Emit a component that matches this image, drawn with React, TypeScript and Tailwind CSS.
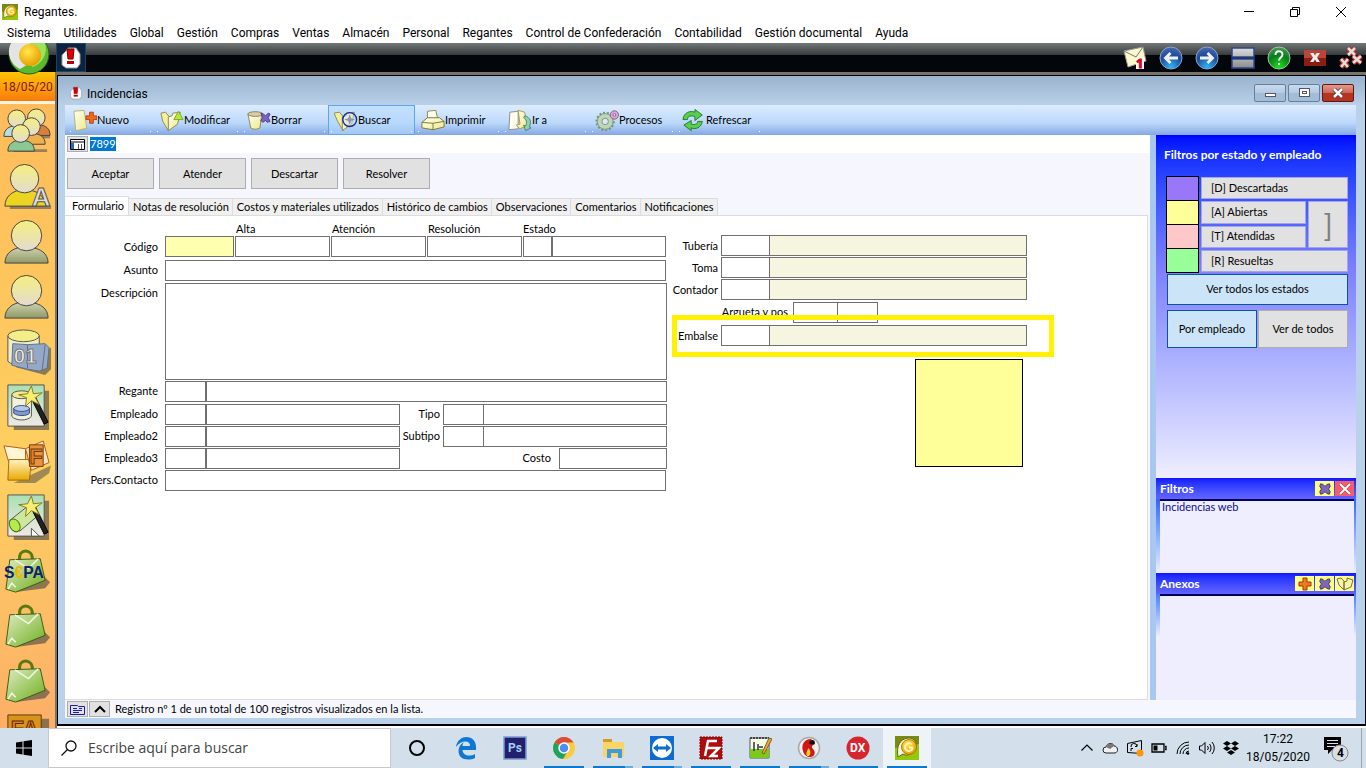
import React from 'react';

const uiFont = "font-[Roboto,'Open_Sans',sans-serif]";
const formFont = "font-[Lato,'Liberation_Sans',sans-serif]";
const iconFont = "font-['Liberation_Sans',Arial,sans-serif]";

const menus = [
    'Sistema', 'Utilidades', 'Global', 'Gestión', 'Compras', 'Ventas', 'Almacén', 'Personal',
    'Regantes', 'Control de Confederación', 'Contabilidad', 'Gestión documental', 'Ayuda',
];

const tabs = [
    'Formulario', 'Notas de resolución', 'Costos y materiales utilizados', 'Histórico de cambios',
    'Observaciones', 'Comentarios', 'Notificaciones',
];

/* Gradients shared by all the icons */
const Gradients: React.FC = () => (
    <svg className="absolute h-0 w-0" aria-hidden="true">
        <defs>
            <linearGradient id="paper" x1="0" y1="0" x2="1" y2="1">
                <stop offset="0" stopColor="#fffff0" />
                <stop offset="1" stopColor="#eee98a" />
            </linearGradient>
            <linearGradient id="head" x1="0" y1="0" x2="0" y2="1">
                <stop offset="0" stopColor="#f6ef7e" />
                <stop offset="1" stopColor="#e2dbd0" />
            </linearGradient>
            <linearGradient id="olive" x1="0" y1="0" x2="0" y2="1">
                <stop offset="0" stopColor="#cfd2ae" />
                <stop offset="1" stopColor="#8f9a68" />
            </linearGradient>
            <linearGradient id="sheet" x1="0" y1="0" x2="0" y2="1">
                <stop offset="0" stopColor="#a9e0b4" />
                <stop offset="1" stopColor="#efe9e4" />
            </linearGradient>
            <linearGradient id="bag" x1="0" y1="0" x2="1" y2="1">
                <stop offset="0" stopColor="#dcebc0" />
                <stop offset="1" stopColor="#6fae1e" />
            </linearGradient>
            <linearGradient id="box" x1="0" y1="0" x2="0" y2="1">
                <stop offset="0" stopColor="#fff3c4" />
                <stop offset="1" stopColor="#eaa800" />
            </linearGradient>
            <linearGradient id="silver" x1="0" y1="0" x2="0" y2="1">
                <stop offset="0" stopColor="#dcdcdc" />
                <stop offset="1" stopColor="#8c8c8c" />
            </linearGradient>
            <radialGradient id="ball" cx="0.4" cy="0.35" r="0.7">
                <stop offset="0" stopColor="#ffe94a" />
                <stop offset="1" stopColor="#e89a00" />
            </radialGradient>
            <radialGradient id="blueBall" cx="0.5" cy="0.9" r="0.9">
                <stop offset="0" stopColor="#2fb4f4" />
                <stop offset="0.6" stopColor="#1c4a9c" />
                <stop offset="1" stopColor="#4a6cb0" />
            </radialGradient>
            <radialGradient id="greenBall" cx="0.5" cy="0.9" r="0.9">
                <stop offset="0" stopColor="#1ee01e" />
                <stop offset="0.6" stopColor="#0b7a1c" />
                <stop offset="1" stopColor="#4a9a5a" />
            </radialGradient>
        </defs>
    </svg>
);

const AppLogo: React.FC<{ className: string }> = ({ className }) => (
    <svg className={className} viewBox="0 0 24 24">
        <path d="M0 0h24v24H0z" fill="#7b8a10" />
        <path d="M0 12L24 8V24H0z" fill="#96c80a" />
        <path d="M3 21C1 10 5 3 13 2s10 9 7 13-10 5-12 3z" fill="#f3f3e6" stroke="#5a6a10" />
        <circle cx="14" cy="11" r="7.5" fill="url(#ball)" stroke="#b07a00" />
        <path d="M17 8.5a4 4 0 1 0 .4 4.5V11.500H14" fill="none" stroke="#fff6c0" strokeWidth="1.800" />
    </svg>
);

const AlertIcon: React.FC<{ className: string }> = ({ className }) => (
    <svg className={className} viewBox="0 0 20 22">
        <path d="M5 4l2-3h8l2 3 2 3v10l-3 4H5l-4-3V8z" fill="#fff" stroke="#999" />
        <path d="M6 2h7l-1 10H7z" fill="#d00" stroke="#700" />
        <path d="M6 14h7v3H6z" fill="#b00" />
    </svg>
);

const Cross: React.FC<{ className: string; fill: string }> = ({ className, fill }) => (
    <svg className={className} viewBox="0 0 16 16">
        <path d="M3 2l3 1 2 2 2-2 3-1 1 3-2 3 2 3-1 3-3-1-2-2-2 2-3 1-1-3 2-3-2-3z" fill={fill} stroke="#3a2a6a" />
    </svg>
);

const toolIcons: Record<string, React.ReactNode> = {
    Nuevo: (
        <>
            <path d="M1 2l11-1 1 6 2 14-3 0-9 2z" fill="url(#paper)" stroke="#b5b070" />
            <path d="M18 3h4v4h4v4h-4v4h-4v-4h-4V7h4z" fill="#f06a1c" stroke="#b83c10" />
        </>
    ),
    Modificar: (
        <>
            <path d="M1 4l5-1 4 5-1 15-6-10z" fill="#f4f0a0" stroke="#8a8550" />
            <path d="M9 8l4-1 1-3 8-1-3 13-10 7z" fill="url(#paper)" stroke="#8a8550" />
            <path d="M20 2l5 9H15z" fill="#b4e83c" stroke="#7aa820" />
        </>
    ),
    Borrar: (
        <>
            <path d="M1 5l3 15c3 2 7 2 10 0l2-15z" fill="url(#paper)" stroke="#8a8550" />
            <ellipse cx="9" cy="5" rx="8" ry="2.500" fill="#d8cfa8" stroke="#8a7a50" />
            <path d="M15 4l3 1 2 2 3-3 2 1-2 4 2 4-3 1-2-2-3 2-2-2 2-3z" fill="#7a62c0" stroke="#4a3890" />
        </>
    ),
    Buscar: (
        <>
            <path d="M0 4l6-1 4 5 0 15-6-10z" fill="#f4f0a0" stroke="#8a8550" />
            <path d="M9 8l4-1 1-3 8-1-3 13-10 7z" fill="url(#paper)" stroke="#8a8550" />
            <circle cx="17" cy="11" r="7.500" fill="#cfe0f0" fillOpacity="0.5" stroke="#1c2c8c" strokeWidth="1.500" />
            <path d="M17 5l1.500 4.500L23 11l-4.500 1.500L17 17l-1.500-4.500L11 11l4.500-1.500z" fill="#8c98a8" />
        </>
    ),
    Imprimir: (
        <>
            <path d="M7 10V2l9-1 2 9z" fill="#ffffe8" stroke="#8a8550" />
            <path d="M1 14l6-5h13l5 4v6l-12 3-12-2z" fill="url(#paper)" stroke="#77733a" />
            <path d="M1 14l12 1 12-2M13 15v7" fill="none" stroke="#77733a" />
        </>
    ),
    'Ir a': (
        <>
            <path d="M2 3l9-1v19l-10 1z" fill="#fffff0" stroke="#8a8a80" />
            <path d="M11 1l7 2 3 14-8 4-4-4 4-1z" fill="url(#paper)" stroke="#a59a40" />
            <path d="M18 7c6 1 8 7 5 12l2 1-6 3-2-6 2 1c2-4 1-7-2-9z" fill="#8cd4a0" stroke="#4a7a8a" />
        </>
    ),
    Procesos: (
        <>
            <circle cx="11" cy="13" r="9" fill="#b8d4b4" stroke="#78907a" strokeWidth="3" strokeDasharray="2 2" />
            <circle cx="11" cy="13" r="8.500" fill="#bcd6b8" stroke="#80987e" />
            <circle cx="11" cy="13" r="3.500" fill="#dce8f8" stroke="#78907a" />
            <circle cx="21" cy="6" r="4.500" fill="#d8a8d4" stroke="#8a5a94" />
            <circle cx="21" cy="6" r="1.500" fill="#f0dcf4" stroke="#8a5a94" />
        </>
    ),
    Refrescar: (
        <>
            <path d="M1 11C2 3 9 1 14 3V0l8 6-8 6V8C10 6 6 7 6 11z" fill="#5ccc4c" stroke="#1c7a2c" />
            <path d="M22 13c-1 7-8 9-12 7v3l-8-6 8-5v4c4 1 7 0 7-3z" fill="#5ccc4c" stroke="#1c7a2c" />
        </>
    ),
};

const Person: React.FC<{ body: string }> = ({ body }) => (
    <>
        <path d="M3 46c0-10 8-15 16-16h10c10 1 18 6 18 16z" fill={body} stroke="#444" />
        <circle cx="25" cy="18" r="15.500" fill="url(#head)" stroke="#444" />
    </>
);

const MiniPerson: React.FC<{ x: number; y: number; body: string }> = ({ x, y, body }) => (
    <g transform={`translate(${x} ${y})`}>
        <path d="M-1 27c0-8 6-10 10-11h6c7 1 11 4 11 11z" fill={body} stroke="#444" />
        <circle cx="12" cy="9" r="9" fill="url(#head)" stroke="#444" />
    </g>
);

const Wand: React.FC = () => (
    <>
        <path d="M29 14l14 28 4-2-14-28z" fill="#222" stroke="#000" />
        <path d="M30 3l2 8 9-1-7 5 4 7-8-4-6 6 1-9-8-3 9-1z" fill="#f6ee70" stroke="#8a7a20" />
    </>
);

const Bag: React.FC = () => (
    <>
        <path d="M14 45l30-4 5-6-8-8z" fill="#444" opacity="0.6" />
        <path d="M18 12c-2-12 14-12 13 0" fill="none" stroke="#5a7a10" strokeWidth="3" />
        <path d="M8 12l31-1 5 22-30 12-10-3z" fill="url(#bag)" stroke="#3f5a14" />
        <path d="M13 12l14 9 10-10M6 42l4-6 4 4" fill="none" stroke="#f4f8e4" strokeWidth="1.500" />
    </>
);

const sideIcons: { name: string; art: React.ReactNode }[] = [
    {
        name: 'Grupos',
        art: (
            <>
                <path d="M12 42h34v3H12zM30 28h19v3H30z" fill="#555" opacity="0.6" />
                <MiniPerson x={23} y={1} body="#d8803c" />
                <MiniPerson x={3} y={2} body="#b4e0e4" />
                <MiniPerson x={18} y={10} body="#eeb04c" />
                <MiniPerson x={7} y={17} body="#8cc894" />
            </>
        ),
    },
    {
        name: 'Administradores',
        art: (
            <>
                <path d="M8 44h42v3H8z" fill="#555" opacity="0.6" />
                <path d="M3 44c0-10 8-15 14-16h12c8 1 14 6 16 16z" fill="#ecd422" stroke="#444" />
                <circle cx="23" cy="16" r="14.500" fill="url(#head)" stroke="#444" />
                <text x="30" y="44" fontSize="27" fontWeight="bold" fill="#e4dcdc" stroke="#555">A</text>
            </>
        ),
    },
    { name: 'Empleados', art: <Person body="url(#olive)" /> },
    { name: 'Clientes', art: <Person body="url(#olive)" /> },
    {
        name: 'Contadores',
        art: (
            <>
                <path d="M14 40l30 8 6-6V20z" fill="#444" opacity="0.6" />
                <path d="M6 8v26c6 6 26 6 32 0V8z" fill="#f2ecc4" stroke="#555" />
                <ellipse cx="22" cy="8" rx="16" ry="6" fill="#f4ee88" stroke="#555" />
                <path d="M11 16l15 1 18-1 4 4-2 21-8 3-12-2-16-4z" fill="#93a9c6" stroke="#60708c" />
                <path d="M26 17v24M44 17l-3 26" stroke="#60708c" />
                <text x="12" y="36" fontSize="21" fontWeight="bold" fill="#f4f0e8" stroke="#777">01</text>
            </>
        ),
    },
    {
        name: 'Asistente de depósitos',
        art: (
            <>
                <path d="M12 8h36v40H12z" fill="#444" opacity="0.6" />
                <path d="M6 2h37v42H6z" fill="url(#sheet)" stroke="#555" />
                <path d="M10 12v22c4 5 16 5 20 0V12z" fill="#f4f2dc" stroke="#555" />
                <ellipse cx="20" cy="12" rx="10" ry="4" fill="#f0ea90" stroke="#555" />
                <path d="M12 26v5c4 3 13 3 16 0v-5z" fill="#7c9cd0" stroke="#3c4c7c" />
                <ellipse cx="20" cy="26" rx="8" ry="3" fill="#b4c8ec" stroke="#3c4c7c" />
                <Wand />
            </>
        ),
    },
    {
        name: 'Facturas',
        art: (
            <>
                <path d="M12 46h22l14-10 2-8z" fill="#444" opacity="0.5" />
                <path d="M2 8l22 3v14H7z" fill="#fdf6d4" stroke="#b85c14" />
                <path d="M7 22h23l-2 21H6z" fill="url(#box)" stroke="#a06c10" />
                <path d="M24 11l18-8 6 22-18 8z" fill="#f8e4c4" stroke="#b85c14" />
                <path d="M28 7h14v22H28z" fill="#e8943c" stroke="#7a3c08" />
                <text x="28" y="27" fontSize="22" fontWeight="bold" fill="#d8842c" stroke="#7a3c08">F</text>
            </>
        ),
    },
    {
        name: 'Asistente de tuberías',
        art: (
            <>
                <path d="M12 8h36v40H12z" fill="#444" opacity="0.6" />
                <path d="M6 2h37v42H6z" fill="url(#sheet)" stroke="#555" />
                <path d="M8 28l20-16 10 10-20 17z" fill="#cde89c" stroke="#555" />
                <ellipse cx="13" cy="33" rx="5" ry="7" fill="#b4ec4c" stroke="#4a6a14" transform="rotate(-30 13 33)" />
                <path d="M30 36l8 8H30z" fill="#fff" stroke="#555" />
                <Wand />
            </>
        ),
    },
    {
        name: 'SEPA',
        art: (
            <>
                <Bag />
                <text x="2" y="31" fontSize="16" fontWeight="bold" fill="#10206c">
                    S<tspan fill="#f0b400">€</tspan>PA
                </text>
            </>
        ),
    },
    { name: 'Compras', art: <Bag /> },
    { name: 'Ventas', art: <Bag /> },
    {
        name: 'Facturación',
        art: (
            <>
                <path d="M12 6h36v40H12z" fill="#444" opacity="0.6" />
                <path d="M6 2h34v42H6z" fill="#d8941c" stroke="#5a3c08" />
                <text x="9" y="24" fontSize="22" fontWeight="bold" fill="#e87c1c" stroke="#5a2c08">FA</text>
            </>
        ),
    },
];

const TopBar: React.FC = () => (
    <header className={`bg-white text-black text-xs ${uiFont}`}>
        <div className="flex h-[23px] items-center pl-0.5 pr-0.5">
            <AppLogo className="size-4" />
            <span className="pl-1.5">Regantes.</span>
            <div className="ml-auto flex">
                <button aria-label="Minimizar" className="flex w-[46px] justify-center">
                    <svg className="size-3" viewBox="0 0 12 12"><path d="M1 5.500h10" stroke="#000" /></svg>
                </button>
                <button aria-label="Restaurar" className="flex w-[46px] justify-center">
                    <svg className="size-3" viewBox="0 0 12 12"><path d="M1.500 3.500h7v7h-7zM3.500 3.500v-2h7v7h-2" fill="none" stroke="#000" /></svg>
                </button>
                <button aria-label="Cerrar" className="flex w-[46px] justify-center">
                    <svg className="size-3" viewBox="0 0 12 12"><path d="M1 1l10 10M11 1L1 11" stroke="#000" /></svg>
                </button>
            </div>
        </div>
        <nav className="flex h-5 items-center gap-[13px] pl-[7px]">
            {menus.map((m) => (
                <button key={m} className="whitespace-nowrap">{m}</button>
            ))}
        </nav>
    </header>
);

const BlackBar: React.FC = () => (
    <div className="relative flex h-[29px] items-center bg-linear-to-b from-[#727877] from-0% via-[#3a3d3f] via-40% to-[#03060b] to-41%">
        <div className="w-14" />
        <svg className="absolute left-2 top-0 z-10 h-8 w-11" viewBox="0 0 44 32">
            <circle cx="21" cy="11" r="20" fill="#5cb82c" stroke="#2c5c14" />
            <path d="M3 0a19 19 0 0 0 9 26l10-6V0z" fill="#e4e4e4" />
            <path d="M22 0h15c3 10-2 20-12 24l-5-4z" fill="#9ce45c" />
            <circle cx="22" cy="12" r="11" fill="url(#ball)" />
        </svg>
        <button aria-label="Incidencias" className="flex h-full w-[30px] items-center justify-center border border-[#1c4468] bg-[#0c2440]">
            <AlertIcon className="h-[22px] w-5" />
        </button>
        <div className="ml-auto flex gap-3 pr-[3px]">
            <button aria-label="Mensajes">
                <svg className="size-6 overflow-visible" viewBox="0 0 24 24">
                    <path d="M1 5l19-4 3 14-18 6z" fill="#fbf8cc" stroke="#999" />
                    <path d="M1 5l12 6 7-10" fill="none" stroke="#777" />
                    <path d="M13 12h8v11h-8z" fill="#fff" />
                    <text x="13" y="22" fontSize="13" fontWeight="bold" fill="#e00020" stroke="#e00020">1</text>
                </svg>
            </button>
            <button aria-label="Anterior">
                <svg className="size-6" viewBox="0 0 24 24">
                    <circle cx="12" cy="12" r="11" fill="url(#blueBall)" stroke="#8aa4c8" />
                    <path d="M4.500 12l6-6 2 2-2.500 2.500h9v3h-9l2.500 2.500-2 2z" fill="#f0f0f0" />
                </svg>
            </button>
            <button aria-label="Siguiente">
                <svg className="size-6" viewBox="0 0 24 24">
                    <circle cx="12" cy="12" r="11" fill="url(#blueBall)" stroke="#8aa4c8" />
                    <path d="M19.500 12l-6-6-2 2 2.500 2.500H5v3h9l-2.500 2.500 2 2z" fill="#f0f0f0" />
                </svg>
            </button>
            <button aria-label="Mosaico">
                <svg className="size-6" viewBox="0 0 24 24">
                    <path d="M1 2h22v9H1zM1 13h22v9H1z" fill="url(#silver)" stroke="#2c4890" strokeWidth="1.500" />
                </svg>
            </button>
            <button aria-label="Ayuda">
                <svg className="size-6" viewBox="0 0 24 24">
                    <circle cx="12" cy="12" r="11" fill="url(#greenBall)" stroke="#9cc89c" />
                    <path d="M8.500 9c0-5 7-5 7-.500 0 3-3.500 3-3.500 6M12 17v2" fill="none" stroke="#f0fff0" strokeWidth="2" />
                </svg>
            </button>
            <button aria-label="Cerrar ventana">
                <svg className="size-6" viewBox="0 0 24 24">
                    <path d="M1 4h22v16H1z" fill="#b8443a" />
                    <path d="M1 12h22v8H1z" fill="#8a1c14" />
                    <path d="M7 7h3.500l1.500 2.500L13.500 7H17l-3 4.500 3 4.500h-3.500L12 13.500 10.500 16H7l3-4.500z" fill="#eee" />
                </svg>
            </button>
            <button aria-label="Cerrar todas">
                <svg className="size-6" viewBox="0 0 24 24">
                    <path d="M9 2l7 7M16 2L9 9M2 13l7 8M9 13l-7 8M14 10l8 7M22 10l-8 7" stroke="#a8382c" strokeWidth="5" />
                    <path d="M9 2l7 7M16 2L9 9M2 13l7 8M9 13l-7 8M14 10l8 7M22 10l-8 7" stroke="#e8dcdc" strokeWidth="2.500" />
                </svg>
            </button>
        </div>
    </div>
);

const SideBar: React.FC = () => (
    <aside className="flex w-[55px] shrink-0 flex-col overflow-hidden bg-linear-175 from-[#ffb95a] via-[#fdd060] via-60% to-[#fcae68] [contain:size]">
        <div className={`flex h-[29px] shrink-0 items-center justify-center bg-linear-to-b from-[#ffc400] to-[#f97a0c] text-xs text-[#7a1c08] ${uiFont}`}>
            18/05/20
        </div>
        <div className="h-[3px] shrink-0 bg-[#fff4dc]" />
        {sideIcons.map((icon) => (
            <button key={icon.name} aria-label={icon.name} className="h-[55px] shrink-0 pl-0.5">
                <svg className={`size-[50px] ${iconFont}`} viewBox="0 0 51 49">{icon.art}</svg>
            </button>
        ))}
    </aside>
);

const WindowTitle: React.FC = () => (
    <div className={`flex h-[29px] items-center gap-[5px] bg-linear-to-b from-[#9ab3ce] to-[#b9d0e8] pl-3 pr-[11px] text-xs text-black ${uiFont}`}>
        <AlertIcon className="mt-1 h-4 w-3" />
        <h1 className="pt-1.5">Incidencias</h1>
        <div className="ml-auto flex gap-0.5 pt-1">
            <button aria-label="Minimizar incidencias" className="flex h-[18px] w-8 items-center justify-center rounded-xs border border-[#64809c] bg-linear-to-b from-[#c8daee] via-[#b4cae2] via-50% to-[#a4bcd6] to-51%">
                <span className="mt-1 h-1 w-[11px] border border-[#556] bg-white" />
            </button>
            <button aria-label="Maximizar incidencias" className="flex h-[18px] w-8 items-center justify-center rounded-xs border border-[#64809c] bg-linear-to-b from-[#c8daee] via-[#b4cae2] via-50% to-[#a4bcd6] to-51%">
                <span className="flex h-[9px] w-[11px] items-center justify-center border border-[#556] bg-white">
                    <span className="h-[3px] w-[5px] border border-[#556]" />
                </span>
            </button>
            <button aria-label="Cerrar incidencias" className="flex h-[18px] w-8 items-center justify-center rounded-xs border border-[#6a1410] bg-linear-to-b from-[#e09a90] via-[#cc6454] via-50% to-[#b43424] to-51%">
                <svg className="h-2.5 w-3" viewBox="0 0 12 10">
                    <path d="M2 1l8 8M10 1L2 9" stroke="#533" strokeWidth="4" />
                    <path d="M2 1l8 8M10 1L2 9" stroke="#fff" strokeWidth="2.500" />
                </svg>
            </button>
        </div>
    </div>
);

const ToolBar: React.FC = () => (
    <div className={`flex h-[30px] bg-linear-to-b from-[#dcecff] via-[#bcd8fa] via-60% to-[#84a8e4] pl-0.5 ${formFont}`}>
        {Object.keys(toolIcons).map((name) => (
            <button
                key={name}
                className={`relative flex w-[87px] items-center border pl-[5px] text-[11px] text-black ${name === 'Buscar' ? 'border-[#5fa4ec] bg-[#b4d8fc]/60' : 'border-transparent'}`}
            >
                <svg className="h-[23px] w-6 shrink-0" viewBox="0 0 26 24">{toolIcons[name]}</svg>
                <span>{name}</span>
                <span className="absolute bottom-0.5 left-0.5 size-px bg-white" />
                <span className="absolute bottom-0.5 right-0.5 size-px bg-white" />
            </button>
        ))}
    </div>
);

const field = 'block h-[21px] border border-[#707070] px-1 outline-none';

const Row: React.FC<{ label: string; id: string; className?: string; children: React.ReactNode }> = ({ label, id, className = '', children }) => (
    <div className={`flex ${className}`}>
        <label htmlFor={id} className="w-[100px] pr-[7px] pt-[3px] text-right">{label}</label>
        {children}
    </div>
);

const EmployeeRow: React.FC<{ label: string; id: string; className: string; children: React.ReactNode }> = ({ label, id, className, children }) => (
    <Row label={label} id={id} className={className}>
        <input id={id} className={`${field} w-[41px]`} />
        <input aria-label={`Nombre ${label}`} className={`${field} w-[194px]`} />
        {children}
    </Row>
);

const dates = [
    { label: 'Alta', id: 'alta' },
    { label: 'Atención', id: 'atencion' },
    { label: 'Resolución', id: 'resolucion' },
];

const MainForm: React.FC = () => (
    <form className="w-[602px] shrink-0">
        <div className="flex">
            <label htmlFor="codigo" className="w-[100px] pr-[7px] pt-6 text-right">Código</label>
            <input id="codigo" className={`${field} mr-px mt-5 w-[69px] bg-[#ffffb0]`} />
            {dates.map((d) => (
                <div key={d.id} className="mr-px">
                    <label htmlFor={d.id} className="flex h-5 items-end pl-px">{d.label}</label>
                    <input id={d.id} className={`${field} w-[95px]`} />
                </div>
            ))}
            <div>
                <label htmlFor="estado" className="flex h-5 items-end">Estado</label>
                <div className="flex">
                    <input id="estado" className={`${field} w-[29px]`} />
                    <input aria-label="Nombre del estado" className={`${field} w-[114px]`} />
                </div>
            </div>
        </div>
        <Row label="Asunto" id="asunto" className="mt-[3px]">
            <input id="asunto" className={`${field} w-[501px]`} />
        </Row>
        <Row label="Descripción" id="descripcion" className="mt-0.5">
            <textarea id="descripcion" className="block h-[97px] w-[502px] resize-none border border-[#707070] outline-none" />
        </Row>
        <Row label="Regante" id="regante" className="mt-px">
            <input id="regante" className={`${field} w-[41px]`} />
            <input aria-label="Nombre del regante" className={`${field} w-[461px]`} />
        </Row>
        <EmployeeRow label="Empleado" id="empleado" className="mt-0.5">
            <label htmlFor="tipo" className="w-[43px] pr-[3px] pt-[3px] text-right">Tipo</label>
            <input id="tipo" className={`${field} w-10 border-r-0`} />
            <input aria-label="Nombre del tipo" className={`${field} w-[184px]`} />
        </EmployeeRow>
        <EmployeeRow label="Empleado2" id="empleado2" className="mt-px">
            <label htmlFor="subtipo" className="w-[43px] pr-[3px] pt-[3px] text-right">Subtipo</label>
            <input id="subtipo" className={`${field} w-10 border-r-0`} />
            <input aria-label="Nombre del subtipo" className={`${field} w-[184px]`} />
        </EmployeeRow>
        <EmployeeRow label="Empleado3" id="empleado3" className="mt-px">
            <label htmlFor="costo" className="w-[159px] pr-2 pt-[3px] text-right">Costo</label>
            <input id="costo" className={`${field} w-[108px]`} />
        </EmployeeRow>
        <Row label="Pers.Contacto" id="contacto" className="mt-px">
            <input id="contacto" className={`${field} w-[501px]`} />
        </Row>
    </form>
);

const AssetRow: React.FC<{ label: string; id: string }> = ({ label, id }) => (
    <div className="flex">
        <label htmlFor={id} className="w-[54px] pr-[3px] pt-1 text-right">{label}</label>
        <input id={id} className={`${field} w-12 border-r-0`} />
        <input aria-label={`Nombre ${label}`} className={`${field} w-[258px] bg-[#f5f5e0]`} />
    </div>
);

const AssetForm: React.FC = () => (
    <form className="flex w-[360px] shrink-0 flex-col pt-[19px]">
        <div className="flex flex-col gap-px">
            <AssetRow label="Tubería" id="tuberia" />
            <AssetRow label="Toma" id="toma" />
            <AssetRow label="Contador" id="contador" />
        </div>
        <div className="mt-0.5 flex">
            <label htmlFor="argueta" className="w-[126px] pr-[5px] pt-[3px] text-right">Argueta y pos</label>
            <input id="argueta" className={`${field} w-11 border-r-0`} />
            <input aria-label="Posición" className={`${field} w-[41px]`} />
        </div>
        <div className="relative mt-0.5">
            <AssetRow label="Embalse" id="embalse" />
            <div className="pointer-events-none absolute -bottom-[11px] -right-[27px] -top-2.5 left-[5px] border-5 border-[#fff200]" />
        </div>
        <div className="mr-1 mt-[13px] size-[108px] self-end border border-black bg-[#ffff99]" />
    </form>
);

const stateButton = 'border border-[#a4a4e8] bg-[#e1e1e1] pl-[9px] text-left';

const StatePanel: React.FC = () => (
    <aside className={`flex w-[206px] shrink-0 flex-col border-l-6 border-[#a8c8f0] bg-[#efeeff] text-[11px] ${formFont}`}>
        <section className="flex h-[343px] flex-col bg-linear-to-b from-[#0000ff] via-[#8080ff] via-40% to-[#efeeff] px-2">
            <h2 className="pb-[13px] pt-3 font-bold leading-4 text-white text-xs">Filtros por estado y empleado</h2>
            <div className="ml-0.5 flex gap-0.5">
                <div className="w-[33px] border border-b-0 border-black *:h-6 *:border-b *:border-black">
                    <div className="bg-[#9878f8]" />
                    <div className="bg-[#ffff99]" />
                    <div className="bg-[#ffc8c8]" />
                    <div className="bg-[#98ff98]" />
                </div>
                <div className="grid grow grid-cols-[1fr_40px] grid-rows-4 gap-x-0.5 gap-y-0.5 pb-px pt-px">
                    <button className={`${stateButton} col-span-2`}>[D] Descartadas</button>
                    <button className={stateButton}>[A] Abiertas</button>
                    <button aria-label="Abiertas y atendidas" className="row-span-2 border border-[#a4a4e8] bg-[#e1e1e1] text-3xl text-[#808080]">]</button>
                    <button className={stateButton}>[T] Atendidas</button>
                    <button className={`${stateButton} col-span-2`}>[R] Resueltas</button>
                </div>
            </div>
            <button className="ml-[3px] mt-px h-[31px] border border-[#0c5499] bg-[#cce4f7]">Ver todos los estados</button>
            <div className="ml-[3px] mt-[5px] grid h-[38px] grid-cols-2 gap-px">
                <button className="border border-[#0c5499] bg-[#cce4f7]">Por empleado</button>
                <button className="border border-[#adadad] bg-[#e1e1e1]">Ver de todos</button>
            </div>
        </section>
        <section className="flex h-[95px] flex-col bg-linear-to-b from-[#1010ff] to-[#efeeff]">
            <div className="flex h-[21px] items-center gap-px bg-linear-to-b from-[#1414ff] to-[#6464ff] pl-1 pr-0.5">
                <h2 className="mr-auto text-xs font-bold text-white">Filtros</h2>
                <button aria-label="Quitar filtro" className="flex h-[15px] w-[19px] items-center justify-center bg-[#ffff88]">
                    <Cross className="size-3.5" fill="#8068b8" />
                </button>
                <button aria-label="Cerrar filtros" className="flex h-[15px] w-[19px] items-center justify-center bg-[#f85c6c]">
                    <svg className="size-3" viewBox="0 0 12 12">
                        <path d="M1 1l10 10M11 1L1 11" stroke="#844" strokeWidth="3" />
                        <path d="M1 1l10 10M11 1L1 11" stroke="#fff" strokeWidth="2" />
                    </svg>
                </button>
            </div>
            <div className="ml-1 mr-0.5 grow border-t-2 border-[#000060] bg-[#efeeff] pl-0.5 leading-3">
                <a href="#incidencias-web" className="text-[#0c0c8c]">Incidencias web</a>
            </div>
        </section>
        <section className="flex grow flex-col bg-linear-to-b from-[#1010ff] from-0% to-[#efeeff] to-50%">
            <div className="flex h-[21px] items-center gap-px bg-linear-to-b from-[#1414ff] to-[#6464ff] pl-1 pr-0.5">
                <h2 className="mr-auto text-xs font-bold text-white">Anexos</h2>
                <button aria-label="Añadir anexo" className="flex h-[15px] w-[19px] items-center justify-center bg-[#ffff88]">
                    <svg className="size-3.5" viewBox="0 0 14 14"><path d="M5 1h4v4h4v4H9v4H5V9H1V5h4z" fill="#f07820" stroke="#983c08" /></svg>
                </button>
                <button aria-label="Quitar anexo" className="flex h-[15px] w-[19px] items-center justify-center bg-[#ffff88]">
                    <Cross className="size-3.5" fill="#8068b8" />
                </button>
                <button aria-label="Abrir anexo" className="flex h-[15px] w-[19px] items-center justify-center bg-[#ffff88]">
                    <svg className="h-[15px] w-[18px]" viewBox="0 0 18 15"><path d="M1 3l4-1 3 3 0 9-5-5zM8 6l3-1 0-3 6 2-2 7-7 3z" fill="#f8f4b0" stroke="#77733a" /></svg>
                </button>
            </div>
            <div className="ml-1 mr-0.5 grow border-t-2 border-[#000060] bg-[#efeeff]" />
        </section>
    </aside>
);

const IncidentWindow: React.FC = () => (
    <main className="flex min-w-0 grow flex-col border border-b-2 border-black bg-[#b9d1ea]">
        <WindowTitle />
        <div className="mb-1.5 ml-[7px] mr-[9px] flex grow flex-col bg-[#f6f7fe]">
            <ToolBar />
            <div className="flex grow">
                <div className={`flex min-w-0 grow flex-col text-[11px] leading-[14px] text-black ${formFont}`}>
                    <div className="flex h-[18px] items-center bg-white pl-0.5">
                        <button aria-label="Ver tabla" className="flex h-4 w-[21px] items-center justify-center border border-[#adadad] bg-[#e1e1e1]">
                            <svg className="h-[11px] w-[15px]" viewBox="0 0 15 11">
                                <path d="M.500 .500h14v10H.500z" fill="#fff" stroke="#000" />
                                <path d="M1 3h13" stroke="#000" />
                                <path d="M1 4h3v6H1z" fill="#1c6cd0" />
                                <path d="M8.500 5v5M11.500 5v5" stroke="#555" />
                            </svg>
                        </button>
                        <span className="ml-0.5 bg-[#0078d7] text-[11px] leading-[14px] text-white">7899</span>
                    </div>
                    <div className="flex gap-[5px] pb-[7px] pl-0.5 pt-[5px] *:h-[31px] *:w-[87px] *:border *:border-[#adadad] *:bg-[#e1e1e1]">
                        <button>Aceptar</button>
                        <button>Atender</button>
                        <button>Descartar</button>
                        <button>Resolver</button>
                    </div>
                    <div role="tablist" className="flex h-[19px] items-end">
                        {tabs.map((t, i) => (
                            <button
                                key={t}
                                role="tab"
                                aria-selected={i === 0}
                                className={`whitespace-nowrap border-r border-t border-[#dcdcdc] ${i === 0 ? 'h-[19px] bg-white pl-[7px] pr-1' : 'h-[17px] bg-[#f0f0f0] pl-1 pr-[3px]'}`}
                            >
                                {t}
                            </button>
                        ))}
                    </div>
                    <div role="tabpanel" className="mr-0.5 flex grow border-b border-r border-t border-[#dcdcdc] bg-white">
                        <MainForm />
                        <AssetForm />
                    </div>
                </div>
                <StatePanel />
            </div>
            <div className={`flex h-[18px] items-center gap-px pl-0.5 text-[11px] text-black ${formFont}`}>
                <button aria-label="Ver ficha" className="flex h-4 w-[21px] items-center justify-center border border-[#adadad] bg-[#e1e1e1]">
                    <svg className="h-[11px] w-[15px]" viewBox="0 0 15 11">
                        <path d="M.500 1.500h7l1 1h6v8H.500zM3 4.500h4M3 6.500h9M3 8.500h6M9 4.500h3" fill="none" stroke="#1c1c9c" />
                    </svg>
                </button>
                <button aria-label="Desplegar" className="flex h-4 w-[21px] items-center justify-center border border-[#adadad] bg-[#e1e1e1]">
                    <svg className="h-2 w-3" viewBox="0 0 12 8"><path d="M1 7l5-5 5 5" fill="none" stroke="#000" strokeWidth="2" /></svg>
                </button>
                <span className="pl-1">Registro nº 1 de un total de 100 registros visualizados en la lista.</span>
            </div>
        </div>
    </main>
);

const apps: { name: string; state: string; art: React.ReactNode }[] = [
    { name: 'Cortana', state: '', art: <circle cx="12" cy="12" r="7" fill="none" stroke="#000" strokeWidth="2" /> },
    {
        name: 'Edge',
        state: '',
        art: <path d="M2 11C3 4 8 1 12.500 1 18 1 22 5 22 11v3H8.500c.500 4 3 5.500 6.500 5.500 2.500 0 4.500-.500 6-1.500v4c-2 1-4.500 1.500-7 1.500C8 23.500 4.500 20 4.500 15c0-4 2-7 5.500-9-1 1.500-1.500 2.500-1.500 4H16c0-3-1.500-4.500-4.500-4.500C7.500 5.500 4.500 7.500 2 11z" fill="#0c78d4" />,
    },
    {
        name: 'Photoshop',
        state: '',
        art: (
            <>
                <path d="M1 1h22v22H1z" fill="#22206c" stroke="#7c9cd0" strokeWidth="1.500" />
                <text x="5" y="16" fontSize="12" fontWeight="bold" fill="#a4ccf8">Ps</text>
            </>
        ),
    },
    {
        name: 'Chrome',
        state: 'on',
        art: (
            <>
                <circle cx="12" cy="12" r="11" fill="#f8cc3c" />
                <path d="M12 12L2.500 6.500A11 11 0 0 1 21.500 6.500H12z" fill="#dc4a3c" />
                <path d="M12 12L2.500 6.500A11 11 0 0 0 11 23l5-8.500z" fill="#1ca45c" />
                <circle cx="12" cy="12" r="5" fill="#4c8cf4" stroke="#fff" strokeWidth="1.500" />
            </>
        ),
    },
    {
        name: 'Explorador de archivos',
        state: 'multi',
        art: (
            <>
                <path d="M2 3h9v4H2z" fill="#d89c1c" />
                <path d="M2 6h21v15H2z" fill="#fcd466" />
                <path d="M6 13h15v9h-4v-5h-7v5H6z" fill="#3c9cdc" />
            </>
        ),
    },
    {
        name: 'TeamViewer',
        state: 'multi',
        art: (
            <>
                <path d="M0 0h24v24H0z" fill="#0c6cd0" />
                <circle cx="12" cy="12" r="10" fill="#fff" />
                <path d="M3 12l5-4v2.500h8V8l5 4-5 4v-2.500H8V16z" fill="#0c6cd0" />
            </>
        ),
    },
    {
        name: 'FileZilla',
        state: 'on',
        art: (
            <>
                <path d="M1 1h22v22H1z" fill="#b00c0c" stroke="#800" strokeDasharray="2 1" />
                <path d="M6 20L9 5h9M8 12h6M12 12h8l-8 8h7" fill="none" stroke="#fff" strokeWidth="2.500" />
            </>
        ),
    },
    {
        name: 'Notepad++',
        state: 'on',
        art: (
            <>
                <path d="M2 2h19v20H2z" fill="#f4fce8" stroke="#555" />
                <path d="M2 13h19v9H2z" fill="#7cc81c" />
                <path d="M2 2h19" stroke="#444" strokeWidth="2" strokeDasharray="2 1" />
                <path d="M6 6v9M10 8v6M11 11h4" stroke="#333" strokeWidth="1.500" />
                <path d="M14 17L21 2l3 1-8 15z" fill="#e8a83c" stroke="#8a5a1c" />
            </>
        ),
    },
    {
        name: 'Firebird',
        state: 'multi',
        art: (
            <>
                <circle cx="12" cy="12" r="10.500" fill="#f0f0f0" stroke="#aaa" strokeWidth="1.500" />
                <path d="M14 3c-7 0-10 6-8 12 1 4 4 6 7 6 5 0 6-5 3-8-2-2-1-4 2-5z" fill="#d01818" />
                <path d="M12 7c1-4 6-4 6 0-1 2-4 2-6 0z" fill="#111" />
                <path d="M10 20c-2-4 1-5 1-8 3 2 3 6 1 8z" fill="#fcd41c" />
            </>
        ),
    },
    {
        name: 'DX',
        state: 'on',
        art: (
            <>
                <circle cx="12" cy="12" r="11.500" fill="#d8242c" />
                <text x="4" y="16" fontSize="12" fontWeight="bold" fill="#fff">DX</text>
            </>
        ),
    },
];

const TaskBar: React.FC = () => (
    <footer className={`flex h-10 shrink-0 bg-[#d3e0eb] text-black ${uiFont}`}>
        <button aria-label="Inicio" className="flex w-12 items-center justify-center">
            <svg className="size-4" viewBox="0 0 16 16">
                <path d="M0 2.500l6.500-1v6H0zM7.500 1.300L16 0v7.500H7.500zM0 8.500h6.500v6L0 13.500zM7.500 8.500H16V16l-8.500-1.300z" />
            </svg>
        </button>
        <label className="flex w-[343px] items-center gap-[11px] border border-[#c8c8c8] bg-white pl-3">
            <svg className="size-4 shrink-0" viewBox="0 0 16 16">
                <circle cx="10" cy="6" r="5" fill="none" stroke="#111" strokeWidth="1.300" />
                <path d="M6.500 9.500L0.500 15.500" stroke="#111" strokeWidth="1.300" />
            </svg>
            <input aria-label="Buscar en Windows" placeholder="Escribe aquí para buscar" className="min-w-0 grow text-sm outline-none placeholder:text-[#444] font-['Open_Sans','Noto_Sans',sans-serif]" />
        </label>
        <div className="ml-0.5 flex gap-px">
            {apps.map((app) => (
                <button key={app.name} aria-label={app.name} className="flex w-12 flex-col items-center">
                    <svg className="mt-2 size-6" viewBox="0 0 24 24">{app.art}</svg>
                    {app.state !== '' && (
                        <span className="mt-auto flex h-0.5 w-10 bg-[#0c78d0]">
                            {app.state === 'multi' && <span className="ml-auto w-2 bg-[#6cacdc]" />}
                        </span>
                    )}
                </button>
            ))}
            <button aria-label="Regantes" className="flex w-12 flex-col items-center bg-[#eef3f7]">
                <AppLogo className="mt-2 size-6" />
                <span className="mt-auto h-0.5 w-10 bg-[#0c78d0]" />
            </button>
        </div>
        <div className="ml-auto flex items-center *:flex *:w-6 *:justify-center">
            <button aria-label="Iconos ocultos">
                <svg className="size-3.5" viewBox="0 0 14 14"><path d="M1.500 9.500L7 4l5.500 5.500" fill="none" stroke="#000" strokeWidth="1.200" /></svg>
            </button>
            <button aria-label="OneDrive">
                <svg className="h-3.5 w-[18px]" viewBox="0 0 18 14"><path d="M4 12a3 3 0 0 1 0-6c1-4 7-5 8-1 4 0 5 6 1 7z" fill="#f0f0f0" stroke="#222" /><path d="M4 6c1-4 7-5 8-1l-4 3z" fill="#777" /></svg>
            </button>
            <button aria-label="Actualizaciones">
                <svg className="size-[18px]" viewBox="0 0 18 18">
                    <path d="M1.500 4.500l14-3v13l-14-1z" fill="none" stroke="#000" />
                    <path d="M5 8a3 3 0 0 1 6-1M11 5v2.500H9M5 9.500h2M5 12V9.500" fill="none" stroke="#000" />
                    <circle cx="14" cy="14" r="3.500" fill="#ff9408" />
                </svg>
            </button>
            <button aria-label="Batería">
                <svg className="h-2.5 w-4" viewBox="0 0 16 10"><path d="M1 1h12v8H1zM14 3.500h1v3h-1" fill="none" stroke="#000" strokeWidth="1.300" /><path d="M2.500 2.500h4v5h-4z" /></svg>
            </button>
            <button aria-label="Wifi">
                <svg className="size-3.5" viewBox="0 0 14 14">
                    <path d="M1 13A12 12 0 0 1 13 1M4 13a9 9 0 0 1 9-9M7 13a6 6 0 0 1 6-6M10 13a3 3 0 0 1 3-3" fill="none" stroke="#000" />
                    <circle cx="12" cy="12.500" r="1.300" />
                </svg>
            </button>
            <button aria-label="Volumen">
                <svg className="size-[18px]" viewBox="0 0 18 18"><path d="M1.500 7h2L7 3.500v11L3.500 11h-2zM9.500 7a3 3 0 0 1 0 4M11.500 5a6 6 0 0 1 0 8M14 3a9 9 0 0 1 0 12" fill="none" stroke="#000" /></svg>
            </button>
            <button aria-label="Dropbox">
                <svg className="size-4" viewBox="0 0 16 16"><path d="M4 1l4 2.500L4 6 0 3.500zM12 1l4 2.500L12 6 8 3.500zM4 6l4 2.500L4 11 0 8.500zM12 6l4 2.500-4 2.500-4-2.500zM8 10l4 2.500L8 15l-4-2.500z" /></svg>
            </button>
        </div>
        <div className="flex w-[70px] flex-col items-center justify-center text-xs leading-[18px]">
            <time>17:22</time>
            <time>18/05/2020</time>
        </div>
        <button aria-label="4 notificaciones" className="flex w-[49px] items-center justify-center border-r border-[#98a4b0]">
            <svg className="mr-1 size-7" viewBox="0 0 28 28">
                <path d="M3 3h17v13h-9l-4 4v-4H3z" />
                <path d="M6 6.500h11M6 9.500h11M6 12.500h8" stroke="#d3e0eb" />
                <circle cx="19" cy="19" r="8" fill="#d8dee4" stroke="#888" />
                <text x="16" y="23" fontSize="12" fontWeight="bold">4</text>
            </svg>
        </button>
        <div className="w-1" />
    </footer>
);

const App: React.FC = () => {
    return (
        <div className="flex min-h-screen flex-col bg-white">
            <Gradients />
            <TopBar />
            <BlackBar />
            <div className="flex grow">
                <SideBar />
                <div className="flex min-w-0 grow border-l-2 border-t-3 border-[#77736c] pb-0.5">
                    <IncidentWindow />
                </div>
            </div>
            <TaskBar />
        </div>
    );
};

export default App;
